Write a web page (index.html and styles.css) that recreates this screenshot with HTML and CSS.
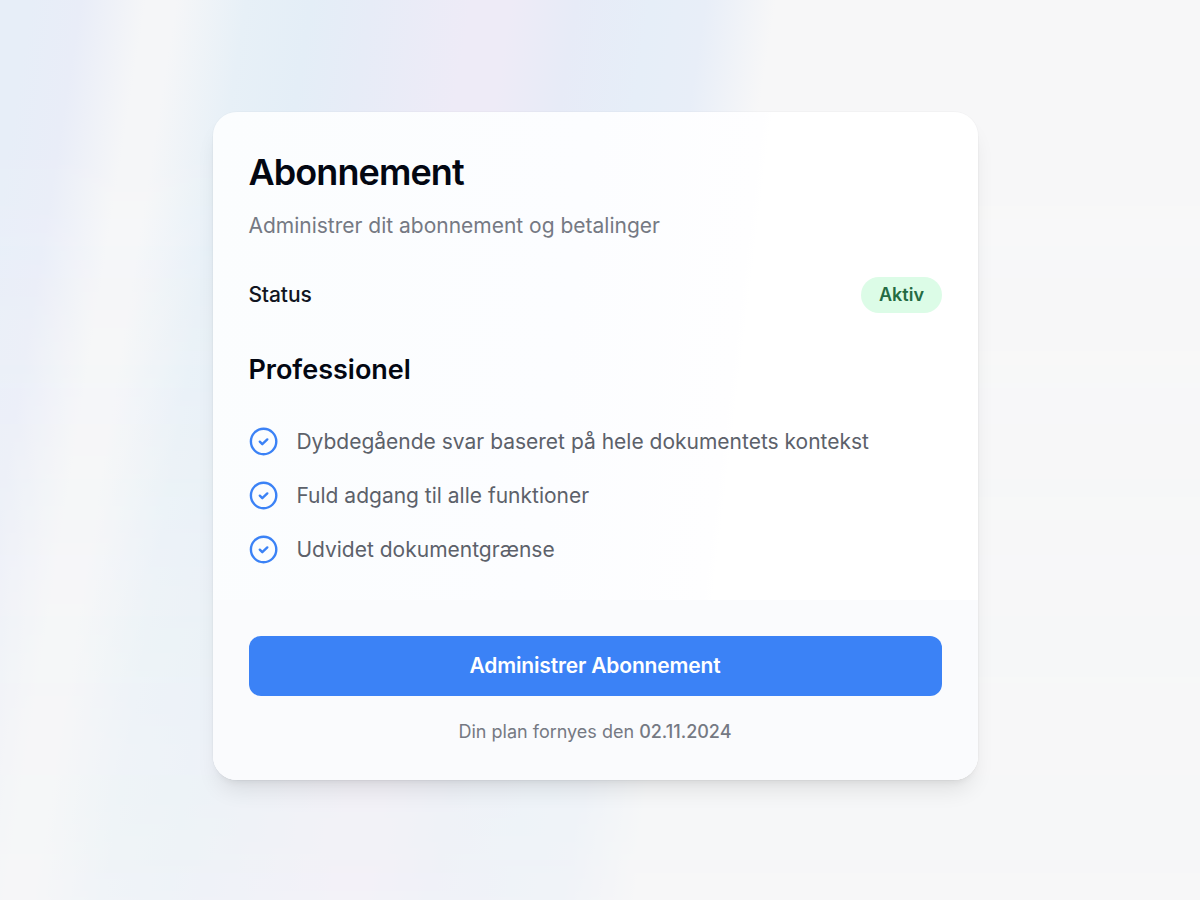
FILE: index.html
```html
<!DOCTYPE html>
<html lang="da">
<head>
<meta charset="utf-8">
<title>Abonnement</title>
<link rel="stylesheet" href="styles.css">
</head>
<body>
<main class="page">
  <section class="card">
    <div class="card-body">
      <h1 class="title">Abonnement</h1>
      <p class="subtitle">Administrer dit abonnement og betalinger</p>
      <div class="status">
        <span class="status-label">Status</span>
        <span class="badge">Aktiv</span>
      </div>
      <h2 class="plan">Professionel</h2>
      <ul class="features">
        <li class="feature"><svg class="check" viewBox="0 0 30 30"><circle cx="15.6" cy="14.5" r="12.7"/><path d="M11.8 14.7l2.5 2.5 5-4.8"/></svg><span>Dybdegående svar baseret på hele dokumentets kontekst</span></li>
        <li class="feature"><svg class="check" viewBox="0 0 30 30"><circle cx="15.6" cy="14.5" r="12.7"/><path d="M11.8 14.7l2.5 2.5 5-4.8"/></svg><span>Fuld adgang til alle funktioner</span></li>
        <li class="feature"><svg class="check" viewBox="0 0 30 30"><circle cx="15.6" cy="14.5" r="12.7"/><path d="M11.8 14.7l2.5 2.5 5-4.8"/></svg><span>Udvidet dokumentgrænse</span></li>
      </ul>
    </div>
    <div class="card-footer">
      <button class="manage" type="button">Administrer Abonnement</button>
      <p class="renewal">Din plan fornyes den <span class="date">02.11.2024</span></p>
    </div>
  </section>
</main>
</body>
</html>
```
FILE: styles.css
```css
* { box-sizing: border-box; margin: 0; padding: 0; }
body { font-family: Inter, "Liberation Sans", sans-serif; color: #030712; }
.page {
  position: relative;
  isolation: isolate;
  width: 1200px;
  height: 900px;
  overflow: hidden;
  padding: 112px 222px 120px 213px;
  background: #f6f7f8;
}
.page::before {
  content: "";
  position: absolute;
  z-index: -1;
  inset: 0 -300px 0 -100px;
  transform: skewX(-9deg);
  background: linear-gradient(90deg, #e7eef8 0 60px, #e9edf8 110px, #f5f6f8 175px 205px, #e7f0f7 275px, #e4eef7 340px, #e7ecf7 400px, #eeebf7 500px 540px, #e7ebf7 605px, #e6eef8 680px, #e8eef8 735px, #f7f7f8 805px);
  -webkit-mask-image: linear-gradient(#000 0%, #000 15%, rgba(0,0,0,.65) 60%, rgba(0,0,0,.42) 100%);
  mask-image: linear-gradient(#000 0%, #000 15%, rgba(0,0,0,.65) 60%, rgba(0,0,0,.42) 100%);
}
.card {
  width: 765px;
  height: 668px;
  display: flex;
  flex-direction: column;
  overflow: hidden;
  border-radius: 24px;
  background: linear-gradient(97deg, #fbfdfe, #fcfdff 45%, #fefeff 65%, #fff 66%);
  box-shadow: 0 0 0 1px rgba(0,0,0,.02), 0 15px 22px -5px rgba(0,0,0,.09), 0 6px 9px -6px rgba(0,0,0,.1);
}
.card-body { height: 488px; padding: 36px 36px 0 35.4px; }
.title { font-size: 36px; line-height: 48px; font-weight: 600; letter-spacing: -.9px; }
.subtitle { margin-top: 15px; font-size: 21px; line-height: 30px; color: #757983; }
.status { display: flex; align-items: center; justify-content: space-between; height: 36px; margin-top: 36px; }
.status-label { margin-top: -2px; font-size: 21px; font-weight: 500; letter-spacing: -.1px; color: #111522; }
.badge { width: 81px; height: 36px; border-radius: 18px; background: #dcfce7; color: #246b43; font-size: 18px; line-height: 36px; font-weight: 600; text-align: center; }
.plan { margin-top: 36px; font-size: 27px; line-height: 42px; font-weight: 600; }
.features { display: flex; flex-direction: column; gap: 24px; margin-top: 36px; list-style: none; }
.feature { display: flex; align-items: center; gap: 18px; height: 30px; font-size: 21px; line-height: 30px; color: #5c616a; }
.check { width: 30px; height: 30px; fill: none; stroke: #3b82f6; stroke-width: 2.4; stroke-linecap: round; stroke-linejoin: round; }
.card-footer { flex: 1; padding: 36px; background: #fafbfd; text-align: center; }
.manage { display: block; width: 693px; height: 60px; padding-right: 1px; border: 0; border-radius: 12px; background: #3b82f6; color: #fff; font: 600 21px/60px Inter, "Liberation Sans", sans-serif; letter-spacing: -.16px; }
.renewal { margin: 24px 1px 0 0; font-size: 18px; line-height: 24px; color: #757983; }
.date { font-weight: 500; }
```
